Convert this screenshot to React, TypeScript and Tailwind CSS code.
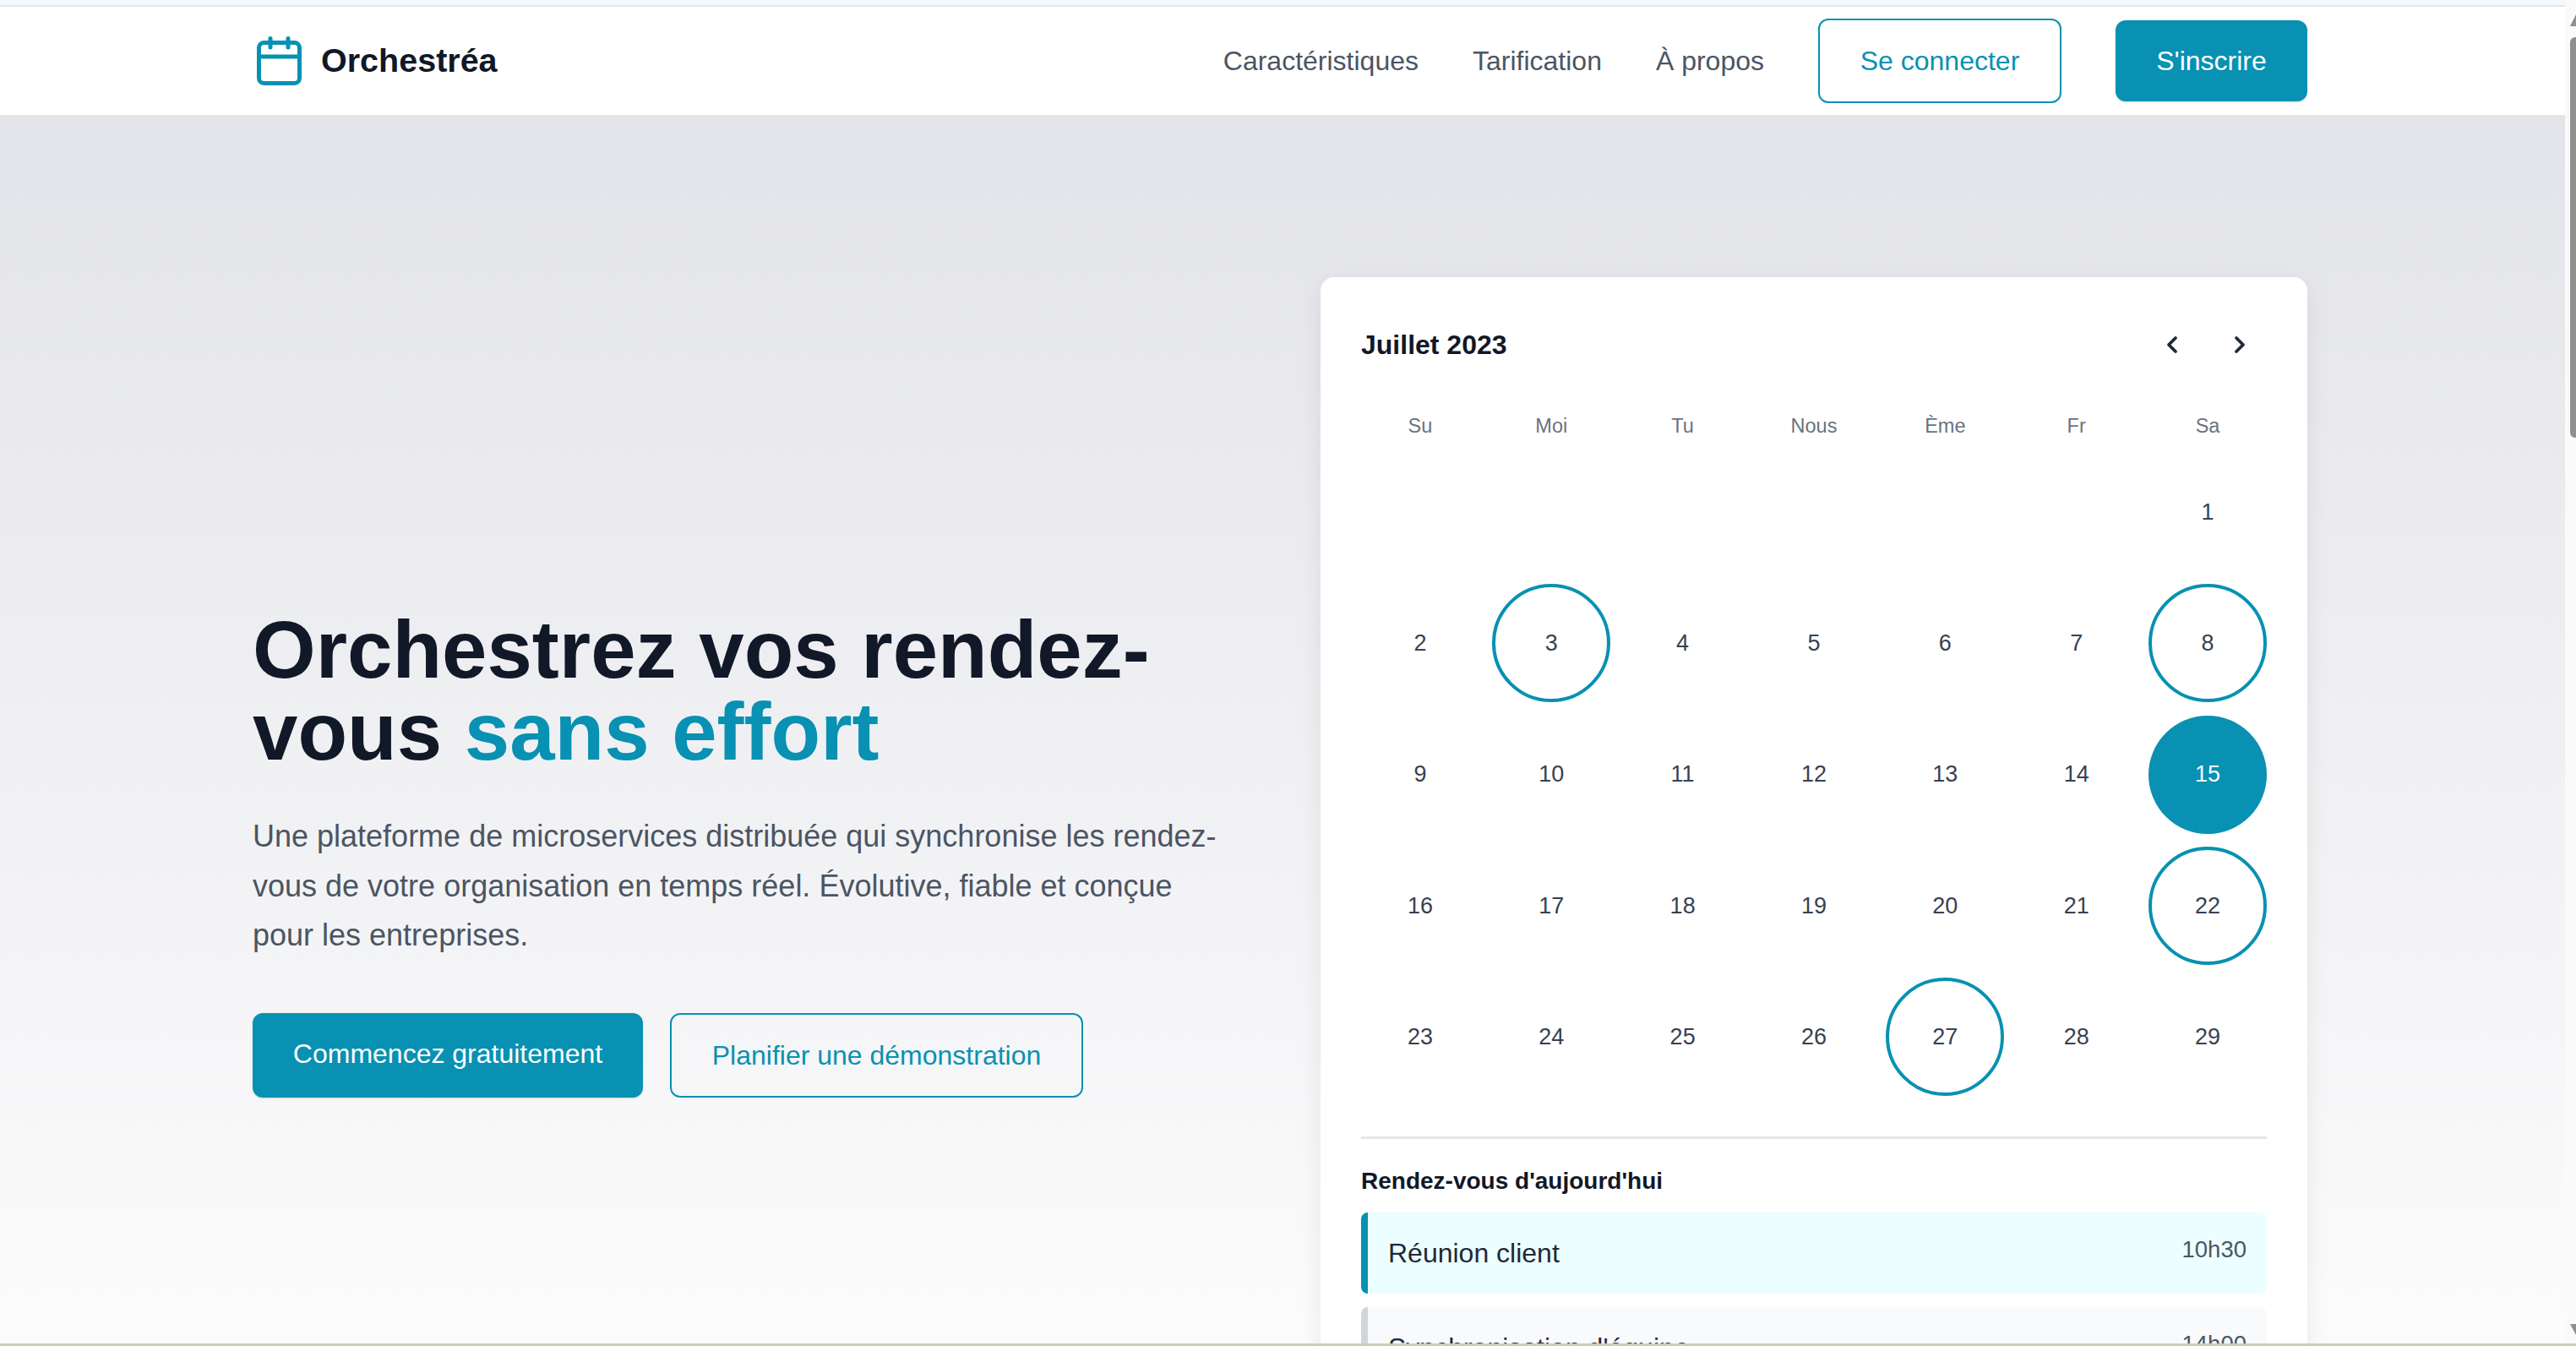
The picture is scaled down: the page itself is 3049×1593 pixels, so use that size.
const days: (number | null)[] = [
  null, null, null, null, null, null, 1,
  2, 3, 4, 5, 6, 7, 8,
  9, 10, 11, 12, 13, 14, 15,
  16, 17, 18, 19, 20, 21, 22,
  23, 24, 25, 26, 27, 28, 29,
];
const weekdays = ['Su', 'Moi', 'Tu', 'Nous', 'Ème', 'Fr', 'Sa'];
const booked = [3, 8, 22, 27];

function CalendarLogo() {
  return (
    <svg viewBox="0 0 53 58" className="h-[58px] w-[53px]" fill="none" stroke="#0891b2" strokeWidth="5" strokeLinecap="round">
      <rect x="2.5" y="7.5" width="48" height="48" rx="6" />
      <path d="M16 2.5v10.5M37 2.5v10.5M2.5 24h48" />
    </svg>
  );
}

function Chevron({ dir }: { dir: 'left' | 'right' }) {
  return (
    <svg viewBox="0 0 16 24" className="h-[24px] w-[16px]" fill="none" stroke="#1f2937" strokeWidth="3.8" strokeLinecap="round" strokeLinejoin="round">
      <path d={dir === 'left' ? 'M12 4l-8 8 8 8' : 'M4 4l8 8-8 8'} />
    </svg>
  );
}

function DayCell({ day }: { day: number | null }) {
  if (day === null) return <div className="aspect-square" />;
  const selected = day === 15;
  const hasEvent = booked.includes(day);
  return (
    <div
      className={`flex aspect-square items-center justify-center rounded-full text-[27px] ${
        selected
          ? 'bg-[#0891b2] text-white'
          : hasEvent
            ? 'border-[4px] border-[#0891b2] text-[#374151]'
            : 'text-[#374151]'
      }`}
    >
      {day}
    </div>
  );
}

export default function App() {
  return (
    <div className="flex h-screen flex-col overflow-hidden bg-white font-['Liberation_Sans',Arial,sans-serif]">
      <div className="flex min-h-0 flex-1">
        <div className="flex h-full min-w-0 flex-1 flex-col overflow-hidden">
          <div className="h-[8px] shrink-0 border-b-2 border-[#e2e8f0] bg-[#f5f9ff]" />
          <header className="flex h-[128px] shrink-0 items-center justify-between bg-white pr-[305px] pl-[299px]">
            <div className="flex items-center gap-[23px] pl-[5px]">
              <CalendarLogo />
              <span className="text-[39.5px] font-bold text-[#111827]">Orchestréa</span>
            </div>
            <nav className="flex items-center gap-[64px] text-[32px] text-[#4b5563]">
              <a>Caractéristiques</a>
              <a>Tarification</a>
              <a>À propos</a>
              <a className="flex h-[100px] w-[288px] items-center justify-center rounded-[12px] border-2 border-[#0891b2] text-[#0891b2]">Se connecter</a>
              <a className="flex h-[96px] w-[227px] items-center justify-center rounded-[12px] bg-[#0891b2] text-white shadow-sm">S'inscrire</a>
            </nav>
          </header>
          <main className="bg-gradient-to-b from-[#e3e4e9] to-white pt-[192px] pr-[305px] pl-[299px]">
            <div className="grid grid-cols-2 items-center gap-[96px] pb-[96px]">
              <div>
                <h1 className="text-[96px] leading-[97px] font-bold text-[#111827]">
                  Orchestrez vos rendez-vous <span className="text-[#0891b2]">sans effort</span>
                </h1>
                <p className="mt-[47px] text-[36px] leading-[58.3px] text-[#4b5563]">
                  Une plateforme de microservices distribuée qui synchronise les rendez-vous de votre organisation en temps réel. Évolutive, fiable et conçue pour les entreprises.
                </p>
                <div className="mt-[63px] flex gap-[32px] text-[32px]">
                  <a className="flex h-[100px] w-[462px] items-center justify-center rounded-[12px] bg-[#0891b2] pb-[4px] text-white shadow-sm">Commencez gratuitement</a>
                  <a className="flex h-[100px] w-[489px] items-center justify-center rounded-[12px] border-2 border-[#0891b2] text-[#0891b2]">Planifier une démonstration</a>
                </div>
              </div>
              <section className="rounded-[16px] bg-white p-[48px] shadow-[0_8px_30px_rgba(0,0,0,0.08)]">
                <div className="flex h-[64px] items-center justify-between pr-[24px]">
                  <h2 className="text-[32px] font-bold text-[#111827]">Juillet 2023</h2>
                  <div className="flex gap-[64px]">
                    <Chevron dir="left" />
                    <Chevron dir="right" />
                  </div>
                </div>
                <div className="mt-[51px] grid grid-cols-7 gap-x-[15.5px] text-center text-[23.5px] leading-[27px] text-[#6b7280]">
                  {weekdays.map((d) => (
                    <div key={d}>{d}</div>
                  ))}
                </div>
                <div className="mt-[18px] grid grid-cols-7 gap-[15.5px]">
                  {days.map((d, i) => (
                    <DayCell key={i} day={d} />
                  ))}
                </div>
                <div className="mt-[48px] border-t-[3px] border-[#e5e7eb] pt-[34px]">
                  <h3 className="text-[28px] leading-[32px] font-bold text-[#111827]">Rendez-vous d'aujourd'hui</h3>
                  <div className="mt-[21px] flex flex-col gap-[16px]">
                    <div className="flex h-[96px] items-center justify-between rounded-[8px] border-l-[8px] border-[#0891b2] bg-[#ecfeff] pr-[24px] pl-[24px]">
                      <span className="text-[32px] text-[#1f2937]">Réunion client</span>
                      <span className="-mt-[10px] text-[27.5px] text-[#4b5563]">10h30</span>
                    </div>
                    <div className="flex h-[96px] items-center justify-between rounded-[8px] border-l-[8px] border-[#d1d5db] bg-[#f9fafb] pr-[24px] pl-[24px]">
                      <span className="text-[32px] text-[#1f2937]">Synchronisation d'équipe</span>
                      <span className="-mt-[10px] text-[27.5px] text-[#4b5563]">14h00</span>
                    </div>
                  </div>
                </div>
              </section>
            </div>
          </main>
        </div>
        <aside className="flex h-full w-[13px] shrink-0 flex-col items-end bg-[#fafafa] pt-[17px] pb-[10px]">
          <div className="h-0 w-0 border-b-[14px] border-l-[7px] border-b-[#8f8f8f] border-l-transparent" />
          <div className="mt-[13px] h-[474px] w-[7px] rounded-l-[6px] bg-[#8f8f8f]" />
          <div className="mt-auto h-0 w-0 border-t-[13px] border-l-[7px] border-t-[#8f8f8f] border-l-transparent" />
        </aside>
      </div>
      <div className="h-[3px] shrink-0 bg-[#cfcabd]" />
    </div>
  );
}
